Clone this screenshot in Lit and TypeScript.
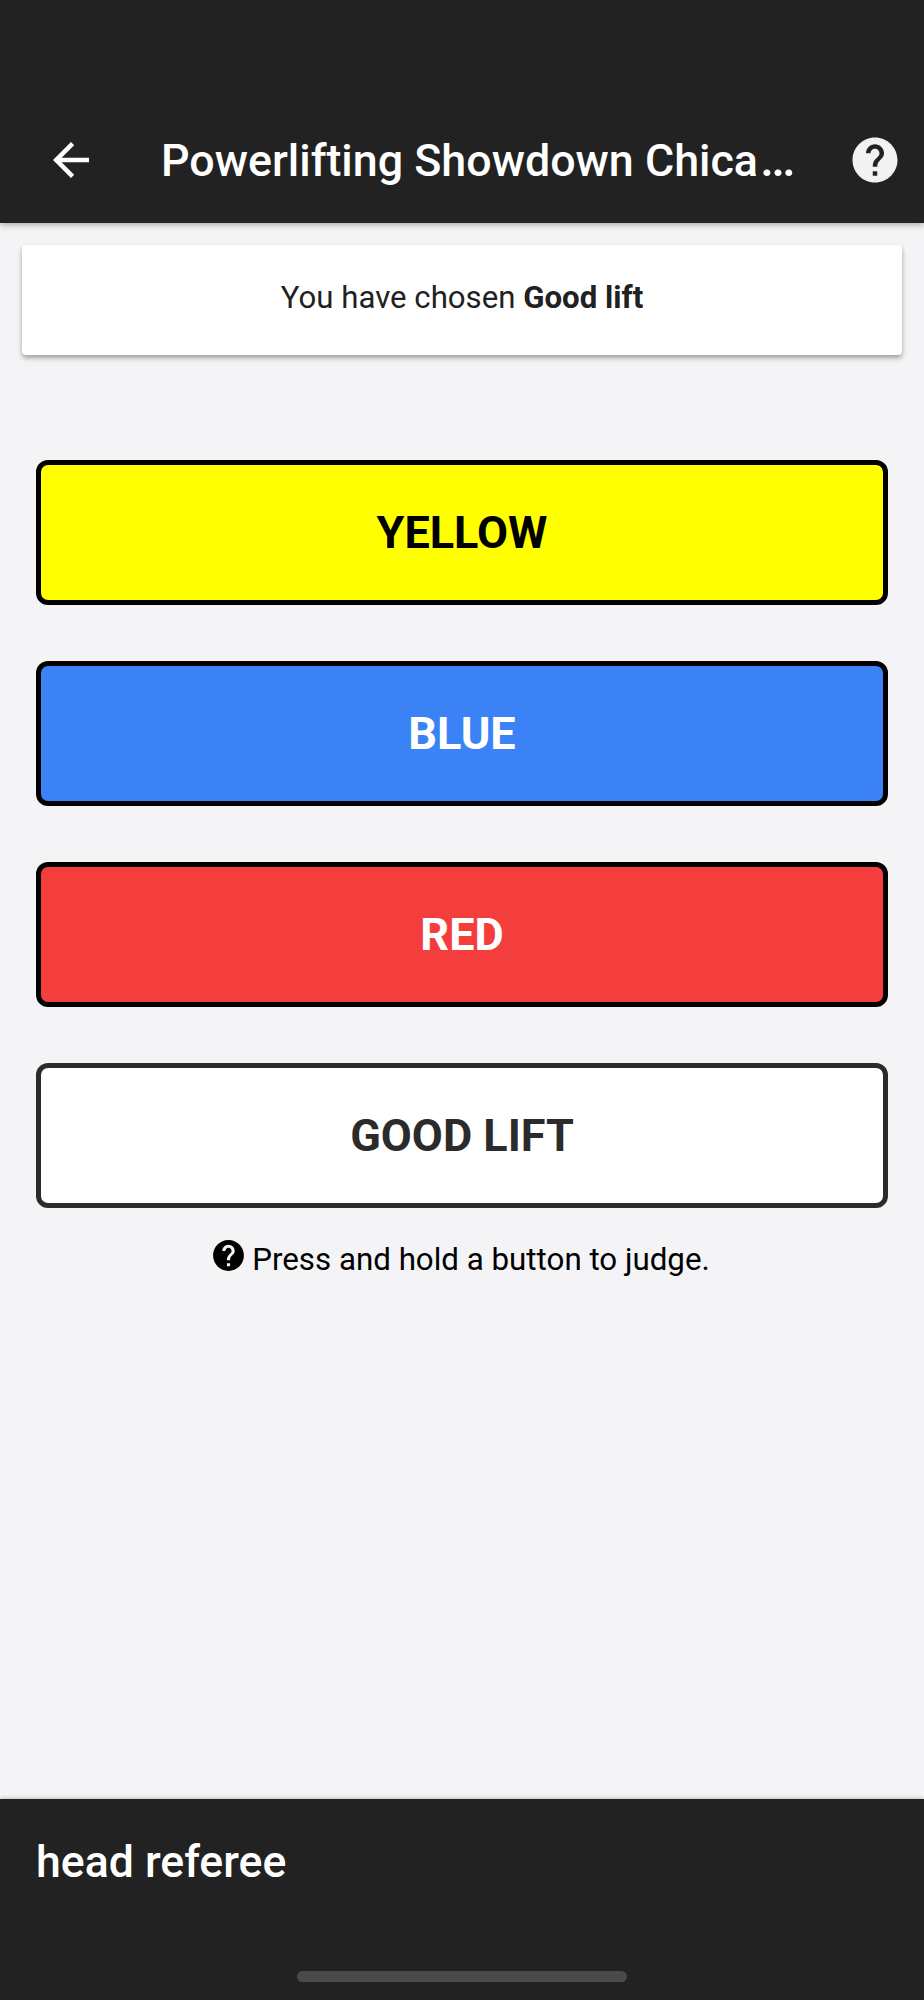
import { LitElement, html, css, svg } from "lit";
import { customElement } from "lit/decorators.js";

const HELP = svg`<path d="M12 2C6.48 2 2 6.48 2 12s4.48 10 10 10 10-4.48 10-10S17.52 2 12 2zm1 17h-2v-2h2v2zm2.07-7.75l-.9.92C13.45 12.9 13 13.5 13 15h-2v-.5c0-1.1.45-2.1 1.17-2.83l1.24-1.26c.37-.36.59-.86.59-1.41 0-1.1-.9-2-2-2s-2 .9-2 2H8c0-2.21 1.79-4 4-4s4 1.79 4 4c0 .88-.36 1.68-.93 2.25z"/>`;
const BACK = svg`<path d="M20 11H7.83l5.59-5.59L12 4l-8 8 8 8 1.41-1.41L7.83 13H20v-2z"/>`;

@customElement("app-root")
export class AppRoot extends LitElement {
  static styles = css`
    :host {
      display: flex;
      flex-direction: column;
      min-height: 2000px;
      background: #f4f4f6;
      font-family: Roboto, "Liberation Sans", sans-serif;
    }
    .header {
      box-sizing: border-box;
      height: 223px;
      flex: none;
      background: #222222;
      display: flex;
      align-items: flex-start;
      padding: 133px 22px 0 44px;
      box-shadow: 0 2px 6px rgba(0, 0, 0, 0.3);
      position: relative;
      color: #fff;
    }
    .ic { width: 54px; height: 54px; flex: none; fill: currentColor; display: block; }
    .help { color: #f2f2f2; }
    .title {
      flex: 1;
      min-width: 0;
      margin: -1px 40px 0 63px;
      font-size: 44.8px;
      line-height: 54px;
      font-weight: 500;
      white-space: nowrap;
    }
    .dots { font-size: 50px; margin-left: 2px; }
    .main {
      flex: 1;
      display: flex;
      flex-direction: column;
      padding: 22px 22px 0;
    }
    .card {
      box-sizing: border-box;
      height: 110px;
      padding-bottom: 5px;
      background: #fff;
      border-radius: 4px;
      box-shadow: 0 3px 5px rgba(0, 0, 0, 0.35);
      display: flex;
      align-items: center;
      justify-content: center;
      font-size: 31.2px;
      color: #212121;
      white-space: pre;
    }
    .card b { font-weight: 700; }
    .buttons {
      display: flex;
      flex-direction: column;
      gap: 56px;
      margin: 105px 14px 0;
    }
    .btn {
      box-sizing: border-box;
      height: 145px;
      border: 5px solid #000;
      border-radius: 12px;
      display: flex;
      align-items: center;
      justify-content: center;
      font-size: 45px;
      font-weight: 700;
    }
    .yellow { background: #ffff00; color: #000; }
    .blue { background: #3b82f6; color: #fff; }
    .red { background: #f43d3d; color: #fff; }
    .good { background: #fff; color: #2b2b2b; border-color: #2b2b2b; }
    .hint {
      display: flex;
      justify-content: center;
      align-items: center;
      margin-top: 30px;
      padding-right: 4px;
      font-size: 31.3px;
      line-height: 44px;
      color: #000;
      gap: 5px;
    }
    .hint svg { width: 37px; height: 37px; fill: #000; flex: none; margin-top: -10px; }
    .footer {
      box-sizing: border-box;
      height: 201px;
      flex: none;
      background: #222222;
      color: #fff;
      display: flex;
      flex-direction: column;
      padding: 35px 36px 18px;
      box-shadow: 0 -1px 4px rgba(0, 0, 0, 0.2);
      position: relative;
    }
    .role { font-size: 44.6px; line-height: 56px; font-weight: 500; }
    .homebar {
      margin: auto auto 0;
      width: 330px;
      height: 11px;
      border-radius: 6px;
      background: #4a4a4a;
    }
  `;

  render() {
    return html`
      <div class="header">
        <svg class="ic" viewBox="0 0 24 24">${BACK}</svg>
        <div class="title">Powerlifting Showdown Chica<span class="dots">…</span></div>
        <svg class="ic help" viewBox="0 0 24 24">${HELP}</svg>
      </div>
      <div class="main">
        <div class="card"><span>You have chosen <b>Good lift</b></span></div>
        <div class="buttons">
          <div class="btn yellow">YELLOW</div>
          <div class="btn blue">BLUE</div>
          <div class="btn red">RED</div>
          <div class="btn good">GOOD LIFT</div>
        </div>
        <div class="hint">
          <svg viewBox="0 0 24 24">${HELP}</svg>
          <span>Press and hold a button to judge.</span>
        </div>
      </div>
      <div class="footer">
        <div class="role">head referee</div>
        <div class="homebar"></div>
      </div>
    `;
  }
}
